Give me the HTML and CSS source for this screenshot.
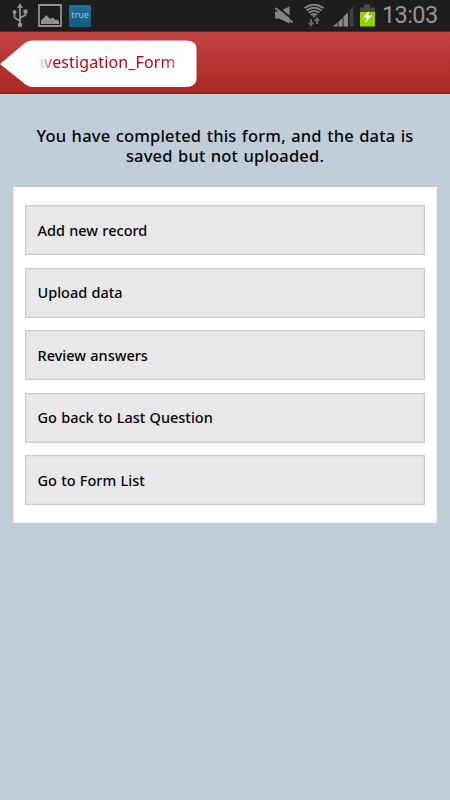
FILE: index.html
```html
<!DOCTYPE html>
<html lang="en">
<head>
<meta charset="utf-8">
<title>Investigation_Form</title>
<link rel="stylesheet" href="styles.css">
</head>
<body>
<div class="status">
  <svg class="status-icons" width="69" height="31" viewBox="0 0 69 31">
    <g fill="none" stroke="#929292" stroke-width="1.800">
      <path d="M20 7V24M20 21L14.500 17.500V13M20 18L25.500 15V11"/>
      <path d="M39 5H61V26H39Z"/>
    </g>
    <g fill="#929292">
      <path d="M20 3l3 5h-6z"/><circle cx="20" cy="25" r="2.300"/><circle cx="14.500" cy="12" r="2"/><path d="M23.500 9.500h4v4h-4z"/>
      <path d="M41 24V20.500L46.500 15l3.500 4 3-1.500 2.500 2.500 1.500-.5L59 21.500V24Z"/>
    </g>
  </svg>
  <span class="true-app">true</span>
  <svg class="signals" width="110" height="31" viewBox="270 0 110 31">
    <path d="M275 11.500h4l10.500-5v17l-10.500-5h-4z" fill="#858585"/>
    <path d="M276.500 6L294 20.500" stroke="#1e1e1e" stroke-width="2"/>
    <path d="M275.500 8L292.500 22.500" stroke="#858585" stroke-width="2"/>
    <g fill="none" stroke="#858585" stroke-width="1.900">
      <path d="M304.500 8q9.500-6.500 19 0M306.500 10.500q7.500-5.500 15 0M308.700 12.800q5.300-3.800 10.600 0M311 15q3-2.200 6 0"/>
    </g>
    <path d="M312 15.500q2-1.200 4 0l-2 2z" fill="#858585"/>
    <g fill="none" stroke="#6b6b6b" stroke-width="1.900">
      <path d="M311 19v5M317 24v-5"/>
    </g>
    <path d="M307.500 22.500h7l-3.500 4zM313.500 21h7l-3.500-4z" fill="#6b6b6b"/>
    <path d="M333 26.500h4.500v-4zM338.500 26.500h4V18l-4 3.700zM343.500 26.500h4.500V12.500l-4.500 4z" fill="#8b8b8b"/>
    <path d="M349.500 26.500h4V6l-4 4.500z" fill="#404040"/>
    <path d="M364 4.500h6v3h5v5h-15v-5h4z" fill="#4a4a4a"/>
    <path d="M360 12h15v14.500h-15z" fill="#92d000"/>
    <path d="M369 11l-6 6.500h4l-2.500 5.500 7.500-7.500h-4z" fill="#fff"/>
  </svg>
  <time class="clock">13:03</time>
</div>
<header class="header">
  <div class="back">
    <svg class="back-shape" width="197" height="48" viewBox="0 0 197 48"><path d="M0 24L25 3Q28.500 .5 32 .5H185Q196.500 .5 196.500 9V38Q196.500 47 185 47H32Q29 47 25 44Z" fill="#fff"/></svg>
    <span class="back-label">Investigation_Form</span>
  </div>
</header>
<main>
  <h1 class="message">You have completed this form, and the data is saved but not uploaded.</h1>
  <nav class="panel">
    <button class="option">Add new record</button>
    <button class="option">Upload data</button>
    <button class="option">Review answers</button>
    <button class="option">Go back to Last Question</button>
    <button class="option">Go to Form List</button>
  </nav>
</main>
</body>
</html>
```
FILE: styles.css
```css
* { box-sizing: border-box; }
body {
  margin: 0;
  height: 800px;
  overflow: hidden;
  background: #c0ccd8;
  color: #050505;
  font-family: "Trebuchet MS", "Noto Sans", sans-serif;
}
.status {
  display: flex;
  align-items: center;
  height: 31px;
  background: #1e1e1e;
}
.status-icons { flex: none; }
.true-app {
  width: 22px;
  height: 22px;
  background: linear-gradient(#1c7099, #145c80);
  color: #9bb4c0;
  font: 500 9px/20px "Noto Sans", sans-serif;
  text-align: center;
  border-radius: 1px;
}
.signals { flex: none; margin-left: 179px; }
.clock {
  margin-left: 2px;
  color: #959595;
  font: 400 23.500px/31px Roboto, sans-serif;
  letter-spacing: -.6px;
}
.header {
  height: 63px;
  padding-top: 8px;
  background: linear-gradient(#c24442, #ac2e2b 80%);
  border-top: 1px solid #68201f;
  border-bottom: 2px solid #a01d15;
}
.back {
  display: grid;
  width: 197px;
  height: 48px;
}
.back-shape, .back-label { grid-area: 1 / 1; }
.back-label {
  display: flex;
  justify-content: flex-end;
  margin: 0 21.500px 0 37px;
  overflow: hidden;
  color: #bd0509;
  font-size: 16px;
  letter-spacing: .12px;
  line-height: 44px;
  white-space: nowrap;
  -webkit-mask-image: linear-gradient(90deg, transparent, #000 18px, #000 125px, rgba(0,0,0,.65));
  mask-image: linear-gradient(90deg, transparent, #000 18px, #000 125px, rgba(0,0,0,.65));
}
.message {
  margin: 32px 30px 0;
  font-size: 16.500px;
  font-weight: 550;
  letter-spacing: .18px;
  word-spacing: .9px;
  line-height: 20px;
  text-align: center;
}
.panel {
  display: flex;
  flex-direction: column;
  gap: 12.500px;
  width: 424px;
  height: 336px;
  margin: 21px 0 0 13px;
  padding: 18px 11px;
  background: #fff;
  border: 1px solid #edf1f4;
  border-top: 0;
  border-left-color: #dfe6ec;
}
.option {
  flex: none;
  height: 50px;
  padding: 0 12px 1px 11.500px;
  border: 1px solid #cdcdcd;
  background: #e8e8e8;
  box-shadow: inset 0 0 2px #c9c9c9;
  color: #050505;
  font: 480 14.500px/20px "Trebuchet MS", "Noto Sans", sans-serif;
  letter-spacing: 0;
  word-spacing: .5px;
  text-align: left;
}
```
